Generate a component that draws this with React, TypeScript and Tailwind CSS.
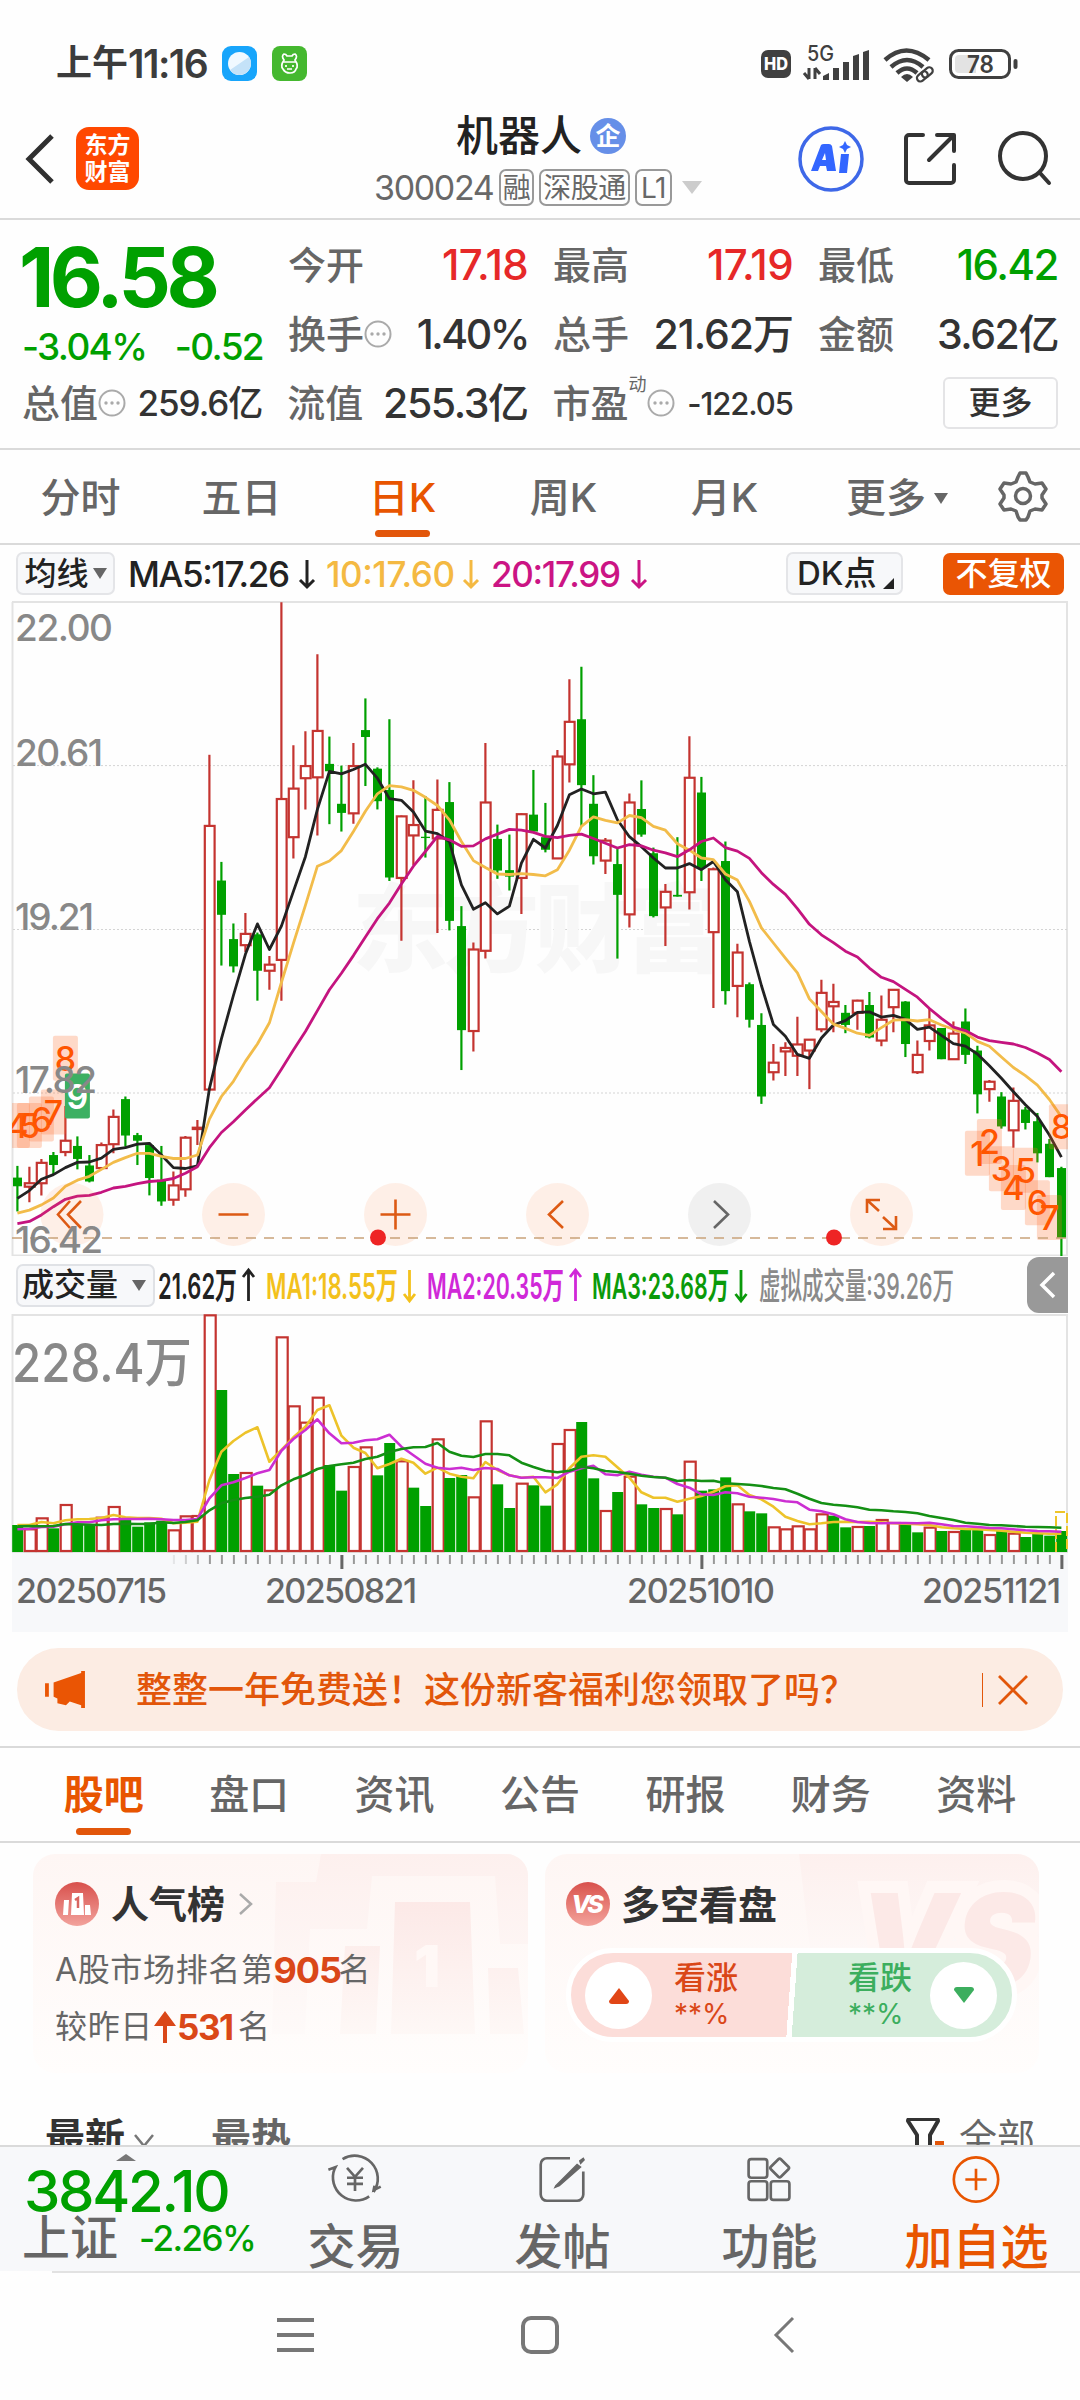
import type { ReactNode } from "react";

type Bar = [high: number, top: number, bottom: number, low: number, up: 0 | 1];

// One entry per trading day, in chart units (28 = 22.00, 1535 = 16.42)
const CANDLES: Bar[] = [
  [1328, 1355, 1375, 1433, 0], [1330, 1368, 1376, 1412, 1], [1312, 1321, 1368, 1396, 1],
  [1296, 1303, 1326, 1348, 0], [1190, 1270, 1296, 1306, 1], [1260, 1282, 1312, 1336, 0],
  [1303, 1327, 1364, 1366, 0], [1274, 1280, 1333, 1333, 1], [1198, 1215, 1278, 1299, 1],
  [1168, 1174, 1258, 1284, 0], [1252, 1257, 1270, 1326, 0], [1275, 1280, 1356, 1396, 0],
  [1282, 1360, 1410, 1420, 0], [1341, 1373, 1406, 1420, 1], [1259, 1263, 1382, 1399, 1],
  [1222, 1240, 1243, 1280, 1], [380, 544, 1152, 1152, 1], [627, 670, 749, 866, 0],
  [769, 805, 868, 882, 0], [745, 793, 819, 835, 1], [790, 794, 878, 947, 0],
  [844, 864, 878, 922, 1], [28, 482, 853, 947, 1], [358, 458, 570, 619, 1],
  [326, 406, 434, 506, 1], [148, 325, 432, 566, 1], [338, 401, 418, 540, 0],
  [405, 493, 514, 557, 0], [353, 406, 515, 539, 1], [250, 323, 339, 452, 0],
  [409, 412, 487, 506, 0], [298, 461, 663, 671, 0], [520, 522, 664, 809, 1],
  [439, 542, 566, 634, 1], [475, 569, 572, 617, 0], [437, 507, 573, 791, 1],
  [443, 489, 763, 785, 0], [729, 775, 1015, 1107, 0], [813, 829, 1017, 1064, 1],
  [353, 490, 832, 850, 1], [541, 574, 647, 666, 0], [564, 646, 661, 693, 0],
  [515, 517, 664, 747, 1], [415, 518, 557, 557, 0], [491, 570, 599, 605, 0],
  [369, 384, 619, 619, 1], [206, 304, 402, 444, 1], [177, 298, 450, 545, 0],
  [427, 493, 614, 633, 0], [572, 578, 624, 655, 1], [596, 632, 703, 850, 0],
  [469, 490, 748, 778, 1], [439, 505, 564, 569, 0], [594, 607, 752, 755, 0],
  [678, 696, 732, 821, 1], [570, 703, 707, 707, 0], [337, 433, 697, 737, 1],
  [431, 467, 641, 671, 0], [640, 644, 789, 964, 1], [580, 625, 925, 956, 0],
  [816, 836, 913, 985, 1], [905, 909, 991, 1009, 0], [976, 1003, 1168, 1185, 0],
  [1047, 1090, 1112, 1131, 1], [1043, 1056, 1064, 1121, 1], [984, 1048, 1074, 1121, 1],
  [1037, 1037, 1062, 1151, 1], [899, 929, 1013, 1020, 1], [908, 950, 960, 1020, 1],
  [957, 975, 1003, 1022, 0], [945, 947, 975, 1014, 1], [927, 957, 1032, 1034, 0],
  [935, 991, 1039, 1052, 1], [921, 922, 962, 1020, 1], [948, 949, 1047, 1077, 0],
  [1039, 1072, 1112, 1116, 1], [964, 1004, 1040, 1062, 1], [1010, 1010, 1082, 1082, 0],
  [995, 1023, 1082, 1082, 1], [965, 995, 1072, 1093, 0], [1051, 1062, 1163, 1207, 0],
  [1130, 1134, 1151, 1180, 1], [1158, 1168, 1237, 1242, 0], [1147, 1178, 1246, 1286, 1],
  [1192, 1198, 1229, 1244, 0], [1206, 1225, 1299, 1320, 0], [1266, 1277, 1354, 1354, 0],
  [1330, 1333, 1494, 1537, 0],
];

const MA5 = [
  1403, 1385, 1359, 1348, 1332, 1320, 1319, 1310, 1290, 1286, 1278, 1276, 1303, 1332, 1334, 1328,
  1150, 1035, 935, 840, 770, 829, 775, 695, 615, 506, 418, 424, 414, 402, 434, 481, 485, 512, 556,
  562, 580, 680, 736, 721, 747, 729, 630, 575, 595, 543, 472, 459, 470, 466, 530, 569, 592, 618,
  641, 641, 631, 645, 626, 668, 696, 810, 912, 1002, 1029, 1071, 1080, 1033, 1003, 993, 974, 973,
  985, 981, 990, 1013, 1008, 1027, 1046, 1052, 1070, 1097, 1126, 1157, 1187, 1214, 1257, 1308,
];
const MA10 = [
  1437, 1430, 1418, 1402, 1375, 1361, 1352, 1336, 1320, 1309, 1299, 1299, 1306, 1311, 1311, 1303,
  1220, 1168, 1133, 1087, 1047, 998, 905, 815, 727, 637, 625, 601, 557, 510, 470, 451, 454, 462,
  478, 497, 530, 580, 624, 640, 655, 656, 654, 656, 659, 645, 600, 545, 523, 531, 537, 520, 525,
  545, 554, 585, 600, 618, 622, 655, 669, 718, 779, 814, 849, 883, 943, 972, 1001, 1011, 1022,
  1027, 1009, 992, 991, 994, 991, 1003, 1013, 1021, 1041, 1052, 1077, 1101, 1120, 1142, 1175, 1215,
];
const MA20 = [
  1461, 1456, 1441, 1422, 1405, 1398, 1396, 1389, 1379, 1375, 1369, 1364, 1362, 1357, 1345, 1330,
  1286, 1251, 1226, 1199, 1173, 1148, 1105, 1061, 1018, 970, 922, 884, 843, 800, 758, 722, 678,
  637, 603, 568, 576, 591, 590, 574, 563, 552, 554, 559, 568, 571, 566, 563, 573, 584, 595, 587,
  590, 600, 606, 615, 599, 580, 572, 594, 602, 619, 652, 679, 702, 735, 771, 795, 813, 833, 846,
  872, 893, 903, 921, 939, 965, 988, 1008, 1016, 1031, 1039, 1043, 1047, 1055, 1068, 1083, 1111,
];

// Negative values are falling days
const VOLUMES = [
  -825, 835, 802, -835, 762, -822, -824, 800, 768, -810, -830, -817, -812, 838, 796, 795, 193, -420,
  -672, 666, -707, 718, 259, 466, 515, 440, -645, -722, 648, 589, -676, -579, 631, -713, -768, 565,
  -684, -675, 739, 511, -703, -774, 698, -706, -767, 579, 537, -516, -685, 780, -726, 677, -763,
  -774, 774, -793, 632, -722, -718, -682, 760, -784, -790, 829, 835, 826, 835, 790, -797, -832, 828,
  -828, 807, 816, -823, -847, 830, -843, 843, -840, -840, 852, -843, 848, -861, -852, -857, -843,
];
const VMA1 = [
  825, 825, 816, 820, 811, 808, 807, 804, 795, 802, 804, 804, 806, 820, 818, 815, 690, 605, 573,
  548, 532, 635, 600, 562, 530, 480, 466, 557, 593, 609, 655, 642, 626, 638, 671, 653, 671, 680,
  685, 636, 660, 676, 683, 680, 727, 703, 655, 620, 616, 620, 652, 683, 727, 743, 743, 755, 746,
  738, 725, 709, 706, 735, 748, 770, 800, 813, 823, 820, 816, 815, 816, 815, 817, 820, 821, 823,
  825, 832, 835, 837, 838, 840, 842, 845, 848, 850, 851, 851,
];
const VMA2 = [
  838, 836, 831, 830, 823, 817, 817, 811, 808, 807, 807, 806, 808, 810, 810, 807, 745, 706, 697,
  684, 670, 660, 602, 567, 540, 508, 550, 580, 578, 571, 568, 554, 590, 616, 641, 653, 657, 653,
  660, 654, 657, 676, 683, 682, 682, 684, 665, 655, 647, 673, 676, 665, 674, 680, 683, 702, 713,
  733, 735, 727, 730, 740, 743, 747, 754, 757, 779, 784, 793, 808, 816, 819, 820, 819, 819, 820,
  818, 823, 828, 829, 831, 834, 835, 838, 841, 843, 844, 845,
];
const VMA3 = [
  829, 828, 829, 828, 822, 823, 824, 825, 822, 821, 822, 822, 817, 819, 816, 811, 781, 760, 750,
  744, 740, 734, 706, 688, 675, 657, 648, 643, 638, 627, 620, 606, 597, 592, 591, 579, 605, 617,
  621, 612, 612, 616, 638, 651, 662, 667, 662, 650, 655, 663, 666, 671, 677, 681, 683, 693, 690,
  693, 692, 700, 702, 704, 708, 714, 718, 731, 746, 759, 764, 767, 772, 779, 781, 784, 786, 790,
  798, 804, 810, 818, 821, 825, 826, 828, 830, 831, 832, 833,
];

const RED = "#c43430";
const GREEN = "#00a000";

const cx = (i: number) => 17.4 + i * 12;
const py = (v: number) => v / 2.306 - 10;
const vy = (v: number) => (v - 192) / 3;
const line = (values: number[], y: (v: number) => number) =>
  values.map((v, i) => `${cx(i)},${y(v).toFixed(1)}`).join(" ");

// Sequence markers: [digit, day index, top]
const MARKS_LEFT: [string, number, number][] = [
  ["4", 0, 1183], ["5", 1, 1183], ["6", 2, 1168], ["7", 3, 1152], ["8", 4, 1028],
];
const MARKS_RIGHT: [string, number, number][] = [
  ["1", 80, 1247], ["2", 81, 1220], ["3", 82, 1283], ["4", 83, 1326],
  ["5", 84, 1286], ["6", 85, 1361], ["7", 86, 1395], ["8", 87, 1186],
];

// Price labels: [text, baseline, width]
const GRID: [string, number, number][] = [
  ["22.00", 118, 98], ["20.61", 406, 88], ["19.21", 785, 79], ["17.82", 1160, 82], ["16.42", 1528, 88],
];

function StatusBar() {
  return (
    <div className="flex h-[110px] items-center justify-between pt-[16px] pr-[60px] pl-[56px]">
      <div className="flex items-center text-[#3c3c3c]">
        <span className="text-[36px] font-bold">上午</span>
        <span className="w-[84px] text-[39px] font-semibold tracking-[-0.04em]">11:16</span>
        <svg className="ml-[10px]" width="35" height="35" viewBox="0 0 35 35">
          <rect width="35" height="35" rx="9" fill="#18a5fb" />
          <circle cx="17.5" cy="17.5" r="11.5" fill="#f0f9ff" />
          <path d="M8 24 27 11a11.5 11.5 0 0 1-19 13z" fill="#c4e2f8" />
        </svg>
        <svg className="ml-[15px]" width="35" height="35" viewBox="0 0 35 35" fill="none" stroke="#fff" strokeWidth="1.7">
          <rect width="35" height="35" rx="8" fill="#45b82f" stroke="none" />
          <path d="M12 14q-3-4 0-6 2 0 3 2h5q1-2 3-2 3 2 0 6 4 6 1 9-1 4-6 4t-7-4q-3-3 1-9zM11 16h13M14 19v2M21 19v2M15 23h5" />
        </svg>
      </div>
      <svg width="260" height="42" viewBox="0 0 260 42">
        <rect x="1" y="8" width="30" height="28" rx="7" fill="#404040" />
        <text x="4" y="28" fontSize="17" fontWeight="800" fill="#fff" textLength="24" lengthAdjust="spacingAndGlyphs">HD</text>
        <text x="47" y="19" fontSize="21" fontWeight="500" fill="#404040" textLength="27" lengthAdjust="spacingAndGlyphs">5G</text>
        <path d="M49 26v11M49 37l-5-6M55 37V26M55 26l5 6" stroke="#404040" strokeWidth="3" fill="none" />
        <path d="M63 38v-4l6-3v7zM73 26h6v12h-6zM83 20h6v18h-6zM93 14l6-2v26h-6zM103 10l6-2v30h-6z" fill="#404040" />
        <g fill="none" stroke="#404040" strokeWidth="4.5">
          <path d="M125 18q21-19 44 0" />
          <path d="M131 25q16-14 32 0" />
          <path d="M137 31q10-9 20 0" />
        </g>
        <path d="M141 35q6-6 12 0l-6 5z" fill="#404040" />
        <g fill="none" stroke="#404040" strokeWidth="2.2">
          <rect x="156" y="31" width="12" height="7" rx="3.5" fill="#fff" transform="rotate(-40 162 34)" />
          <rect x="161" y="27" width="12" height="7" rx="3.5" transform="rotate(-40 167 30)" />
        </g>
        <rect x="190.500" y="8.500" width="59" height="27" rx="8" fill="#fff" stroke="#404040" strokeWidth="3" />
        <path d="M199 13h17v18h-17a4 4 0 0 1-4-4v-10a4 4 0 0 1 4-4z" fill="#e3e3e3" />
        <text x="207" y="31" fontSize="24" fontWeight="600" fill="#404040" textLength="27" lengthAdjust="spacingAndGlyphs">78</text>
        <rect x="253.500" y="17" width="4" height="10" rx="2" fill="#404040" />
      </svg>
    </div>
  );
}

function Header() {
  return (
    <div className="flex h-[110px] items-center border-b-2 border-[#dadada] pr-[26px] pb-[11px] pl-[25px]">
      <svg width="30" height="52" viewBox="0 0 30 52" fill="none" stroke="#303030" strokeWidth="5">
        <path d="M27 3 4 26l23 23" />
      </svg>
      <div className="ml-[21px] grid h-[63px] w-[63px] place-content-center rounded-[13px] bg-[#ff4800] text-center text-[23px] leading-[27px] font-bold text-white">
        <span>东方</span>
        <span>财富</span>
      </div>
      <div className="mt-[4px] ml-[235px] flex w-[328px] flex-col">
        <div className="flex items-center pl-[82px]">
          <span className="text-[42px] font-medium text-[#222]">机器人</span>
          <span className="ml-[8px] grid h-[36px] w-[36px] place-content-center rounded-full bg-[#668fe8] text-[25px] font-bold text-white">企</span>
        </div>
        <div className="mt-[12px] flex items-center text-[#686868]">
          <span className="w-[125px] text-[34px] tracking-[-0.04em]">300024</span>
          <Tag className="w-[35px]">融</Tag>
          <Tag className="ml-[5px] w-[91px]">深股通</Tag>
          <Tag className="ml-[5px] w-[37px]">L1</Tag>
          <span className="ml-[10px] border-x-[10px] border-t-[13px] border-x-transparent border-t-[#ccc]" />
        </div>
      </div>
      <svg className="ml-auto" width="258" height="68" viewBox="-1 0 258 68" fill="none">
        <circle cx="34" cy="34" r="31" stroke="#3e68e8" strokeWidth="3.500" />
        <path d="M14 46 24 20q1-1 3-1h5q2 0 3 2l4 25h-9l-1-5h-6l-2 5zM25 35h4l-1-7zM44 29h8l-2 19h-8z" fill="#3366ff" fillRule="evenodd" />
        <path d="m48 16 2 4 4 2-4 2-2 4-2-4-4-2 4-2z" fill="#3366ff" />
        <g stroke="#333" strokeWidth="4" strokeLinecap="round" strokeLinejoin="round">
          <path d="M126 10h-14a3 3 0 0 0-3 3v42a3 3 0 0 0 3 3h42a3 3 0 0 0 3-3V40M140 10h17v16M156 11l-24 24" />
          <circle cx="226" cy="31" r="23" />
          <path d="m243 48 9 10" />
        </g>
      </svg>
    </div>
  );
}

function Tag({ className, children }: { className: string; children: ReactNode }) {
  return (
    <span className={`grid h-[37px] place-content-center rounded-[7px] border-2 border-[#999] text-[28px] tracking-[-0.02em] ${className}`}>
      {children}
    </span>
  );
}

function Dots() {
  return (
    <svg width="28" height="30" viewBox="0 0 28 30" fill="#aaa">
      <circle cx="14" cy="15" r="12.500" fill="none" stroke="#aaa" strokeWidth="2" />
      <circle cx="8" cy="15" r="1.700" />
      <circle cx="14" cy="15" r="1.700" />
      <circle cx="20" cy="15" r="1.700" />
    </svg>
  );
}

function Quote({ label, value, valueClass, dots }: { label: string; value: string; valueClass?: string; dots?: boolean }) {
  return (
    <div className="flex items-center">
      <span className="text-[38px] font-medium text-[#666]">{label}</span>
      {dots && <Dots />}
      <span className={`ml-auto font-medium whitespace-nowrap ${valueClass ?? "text-[41px] tracking-[-0.035em] text-[#333]"}`}>{value}</span>
    </div>
  );
}

function Quotes() {
  return (
    <div className="h-[230px] border-b-2 border-[#dadada] px-[22px] pt-[10px]">
      <div className="flex gap-[25px]">
        <div className="w-[241px]">
          <div className="-ml-[3px] flex h-[96px] items-center text-[82px] font-bold tracking-[-0.055em] text-[#00a000]">16.58</div>
          <div className="flex h-[41px] items-center justify-between text-[37px] font-medium tracking-[-0.045em] text-[#00a000]">
            <span>-3.04%</span>
            <span>-0.52</span>
          </div>
        </div>
        <div className="grid flex-1 grid-cols-3 grid-rows-[70px_68px] gap-x-[25px]">
          <Quote label="今开" value="17.18" valueClass="text-[42px] tracking-[-0.015em] text-[#e62828]" />
          <Quote label="最高" value="17.19" valueClass="text-[42px] tracking-[-0.015em] text-[#e62828]" />
          <Quote label="最低" value="16.42" valueClass="text-[42px] tracking-[-0.035em] text-[#00a000]" />
          <Quote label="换手" value="1.40%" valueClass="text-[41px] tracking-[-0.06em] text-[#333]" dots />
          <Quote label="总手" value="21.62万" valueClass="text-[41px] tracking-[-0.025em] text-[#333]" />
          <Quote label="金额" value="3.62亿" />
        </div>
      </div>
      <div className="grid h-[70px] grid-cols-4 gap-x-[25px]">
        <Quote label="总值" value="259.6亿" valueClass="text-[35px] tracking-[-0.03em] text-[#333]" dots />
        <Quote label="流值" value="255.3亿" />
        <div className="flex items-center">
          <span className="text-[38px] font-medium text-[#666]">市盈</span>
          <span className="-mt-[36px] text-[18px] text-[#666]">动</span>
          <Dots />
          <span className="ml-auto text-[31px] font-medium tracking-[-0.035em] text-[#333]">-122.05</span>
        </div>
        <div className="flex items-center justify-end">
          <span className="grid h-[52px] w-[115px] place-content-center rounded-[6px] border-2 border-[#e4e4e6] text-[32px] font-medium text-[#333]">更多</span>
        </div>
      </div>
    </div>
  );
}

function PeriodTabs() {
  const tabs = ["分时", "五日", "日K", "周K", "月K"];
  return (
    <div className="flex h-[95px] border-b-2 border-[#dadada] text-[40px] font-medium text-[#666]">
      {tabs.map((tab) => (
        <div key={tab} className={`relative flex w-[161px] items-center justify-center pt-[3px] ${tab === "日K" ? "text-[#e85500]" : ""}`}>
          {tab}
          {tab === "日K" && <span className="absolute bottom-[6px] h-[7px] w-[55px] rounded-full bg-[#e2560a]" />}
        </div>
      ))}
      <div className="flex items-center pt-[3px] pl-[41px]">
        更多
        <span className="ml-[8px] border-x-[7px] border-t-[11px] border-x-transparent border-t-[#666]" />
      </div>
      <svg className="mt-[20px] ml-[49px]" width="52" height="52" viewBox="0 0 52 52" fill="none" stroke="#666" strokeWidth="3.500" strokeLinejoin="round">
        <path d="M21 7 23 3h6l2 4 2 5 5 2 7-1 4 6-4 6v3l4 6-4 6-7-1-5 2-2 6-2 3h-6l-2-3-2-6-5-2-7 1-4-6 4-6v-3l-4-6 4-6 7 1 5-2z" />
        <circle cx="26" cy="26" r="7.500" />
      </svg>
    </div>
  );
}

function MaLegend() {
  return (
    <div className="flex h-[55px] items-center pt-[2px] pr-[16px] pl-[16px]">
      <span className="flex h-[43px] w-[99px] items-center justify-center rounded-[7px] border-2 border-[#e4e5e8] bg-[#f7f8fa] text-[32px] font-medium text-[#222]">
        均线
        <span className="ml-[4px] border-x-[7px] border-t-[11px] border-x-transparent border-t-[#666]" />
      </span>
      <svg className="ml-[11px]" width="530" height="40" viewBox="0 0 530 40" fontSize="35" fontWeight="500">
        <text x="2" y="33" fill="#222" textLength="162">MA5:17.26</text>
        <text x="200" y="33" fill="#f4b942" textLength="129">10:17.60</text>
        <text x="365" y="33" fill="#cb1484" textLength="130">20:17.99</text>
        <g fill="none" strokeWidth="3">
          <path d="M181 6v27M174 26l7 7 7-7" stroke="#222" />
          <path d="M345 6v27M338 26l7 7 7-7" stroke="#f4b942" />
          <path d="M513 6v27M506 26l7 7 7-7" stroke="#cb1484" />
        </g>
      </svg>
      <span className="ml-auto flex h-[43px] w-[117px] items-center rounded-[7px] border-2 border-[#e4e5e8] bg-[#f7f8fa] pl-[9px] text-[33px] font-medium text-[#222]">
        DK点
        <svg className="mt-[20px] ml-[6px]" width="11" height="11" viewBox="0 0 11 11">
          <path d="M11 0v11H0z" fill="#222" />
        </svg>
      </span>
      <span className="ml-[40px] grid h-[42px] w-[121px] place-content-center rounded-[7px] bg-[#ea5504] text-[32px] font-medium text-white">不复权</span>
    </div>
  );
}

function Candle({ bar, i }: { bar: Bar; i: number }) {
  const [high, top, bottom, low, up] = bar;
  const x = cx(i);
  const h = Math.max(py(bottom) - py(top), 1);
  if (!up) {
    return (
      <g fill={GREEN}>
        <rect x={x - 1.1} y={py(high)} width="2.200" height={py(low) - py(high)} />
        <rect x={x - 4.4} y={py(top)} width="9" height={h} />
      </g>
    );
  }
  return (
    <g stroke={RED} strokeWidth="2.200">
      <path d={`M${x} ${py(high)}V${py(top)}M${x} ${py(bottom)}V${py(low)}`} />
      <rect x={x - 4.6} y={py(top)} width="9.800" height={h} fill="#fff" />
    </g>
  );
}

function Mark({ mark: [digit, day, top], green }: { mark: [string, number, number]; green?: boolean }) {
  const x = cx(day);
  return (
    <g>
      <rect x={x - 12.5} y={py(top)} width="25" height="45" rx="2" fill={green ? "#3cb062" : "#ff6a28"} fillOpacity={green ? 1 : 0.25} />
      <text x={x} y={py(top) + 35} textAnchor="middle" fontSize="34" fontWeight={green ? 600 : 500} fill={green ? "#fff" : "#ff5500"}>{digit}</text>
    </g>
  );
}

function PriceChart() {
  return (
    <svg className="block" width="1080" height="656" viewBox="0 0 1080 656" fill="none">
      <clipPath id="plot"><rect x="12" y="2" width="1056" height="655" /></clipPath>
      <g stroke="#e3e3e3" strokeWidth="2">
        <path d="M12.500 2v654M1067 2v654M12 2h1056M12 655.500h1056" />
      </g>
      <path d="M13 165.600h1054M13 329.500h1054M13 493h1054" stroke="#d4d4d4" strokeWidth="1" strokeDasharray="2 2" />
      <text x="352" y="364" fontSize="96" fontWeight="900" fill="#f7f7f7" textLength="370">东方财富</text>
      <g clipPath="url(#plot)">
        {CANDLES.map((bar, i) => <Candle key={i} bar={bar} i={i} />)}
        <g strokeWidth="2.800" strokeLinejoin="round">
          <polyline points={line(MA5, py)} stroke="#222" />
          <polyline points={line(MA10, py)} stroke="#f2bc4a" />
          <polyline points={line(MA20, py)} stroke="#c4147f" />
        </g>
        {MARKS_LEFT.map((m) => <Mark key={m[0]} mark={m} />)}
        {MARKS_RIGHT.map((m) => <Mark key={m[0]} mark={m} />)}
      </g>
      {[72, 233.5, 395.5, 557.5, 719.5, 881.5].map((x, i) => (
        <circle key={x} cx={x} cy="614.500" r="31.500" fill={i === 4 ? "#999" : "#ff7830"} fillOpacity={i === 4 ? 0.14 : 0.11} />
      ))}
      <path d="M12 638h1054" stroke="#c9a27a" strokeWidth="1.500" strokeDasharray="10 8" />
      <Mark mark={["9", 5, 1115]} green />
      <g fill="#888" fontSize="37" fontWeight="500">
        {GRID.map(([label, y, width]) => (
          <text key={label} x="15" y={py(y)} textLength={width}>{label}</text>
        ))}
      </g>
      <g stroke="#dd5a14" strokeWidth="2.600">
        <path d="M70 601 58 614.500 70 628M81 601 68 614.500 81 628" />
        <path d="M218.500 614.500h30M380.500 614.500h30M395.500 599.500v30M563 601l-14 13.500 14 13.500" />
        <path d="M714 601l14 13.500-14 13.500" stroke="#666" />
        <path d="M867 613v-13h13M867 600l12 11M883 629h13v-13M896 629l-13-12" />
      </g>
      <g fill="#ee2424">
        <circle cx="378" cy="637.500" r="8" />
        <circle cx="834" cy="637.500" r="8" />
      </g>
    </svg>
  );
}

function VolumeLegend() {
  return (
    <div className="flex h-[58px] items-center pl-[16px]">
      <span className="flex h-[43px] w-[139px] items-center rounded-[7px] border-2 border-[#e0e2e6] bg-[#f7f8fa] pl-[4px] text-[32px] font-medium text-[#222]">
        成交量
        <span className="ml-[14px] border-x-[7px] border-t-[11px] border-x-transparent border-t-[#666]" />
      </span>
      <svg width="872" height="44" viewBox="155 0 872 44" fontSize="36" fontWeight="600" fill="none" strokeWidth="2.800">
        <text x="158" y="36" fill="#222" textLength="79" lengthAdjust="spacingAndGlyphs">21.62万</text>
        <text x="266" y="36" fill="#f3c11c" textLength="132" lengthAdjust="spacingAndGlyphs">MA1:18.55万</text>
        <text x="427" y="36" fill="#d028d8" textLength="137" lengthAdjust="spacingAndGlyphs">MA2:20.35万</text>
        <text x="592" y="36" fill="#0a9a0a" textLength="137" lengthAdjust="spacingAndGlyphs">MA3:23.68万</text>
        <text x="759" y="36" fill="#8a8a8a" fontWeight="500" textLength="195" lengthAdjust="spacingAndGlyphs">虚拟成交量:39.26万</text>
        <path d="M248.500 38V7M243 14l5.500-7 5.500 7" stroke="#222" />
        <path d="M409.500 7v31M404 31l5.500 7 5.500-7" stroke="#f3c11c" />
        <path d="M575.500 38V7M570 14l5.500-7 5.500 7" stroke="#d028d8" />
        <path d="M741 7v31M735.500 31l5.500 7 5.500-7" stroke="#0a9a0a" />
      </svg>
      <svg width="41" height="56" viewBox="0 0 41 56">
        <path d="M41 0v56H12A12 12 0 0 1 0 44V12A12 12 0 0 1 12 0z" fill="#999" />
        <path d="M27 16 15 28l12 12" fill="none" stroke="#fff" strokeWidth="3.500" />
      </svg>
    </div>
  );
}

function VolumeChart() {
  return (
    <svg className="block" width="1080" height="239" viewBox="0 0 1080 239" fill="none">
      <path d="M12.500 0v238M1067 0v238M12 1h1056M12 238h1056" stroke="#e3e3e3" strokeWidth="2" />
      <text x="12" y="68" fontSize="53" fontWeight="500" fill="#888" textLength="180" lengthAdjust="spacingAndGlyphs">228.4万</text>
      {VOLUMES.map((v, i) => {
        const y = vy(Math.abs(v));
        return v < 0 ? (
          <rect key={i} x={cx(i) - 5.2} y={y} width="11" height={238 - y} fill={GREEN} />
        ) : (
          <rect key={i} x={cx(i) - 4.7} y={y + 1} width="11" height={236 - y} fill="#fff" stroke={RED} strokeWidth="2.200" />
        );
      })}
      <path d="M1056 238v-40h11v40" stroke="#eec52a" strokeWidth="2" strokeDasharray="10 3" />
      <g strokeWidth="2.600" strokeLinejoin="round">
        <polyline points={line(VMA1, vy)} stroke="#edc32a" />
        <polyline points={line(VMA2, vy)} stroke="#cc2ed2" />
        <polyline points={line(VMA3, vy)} stroke="#149014" />
      </g>
    </svg>
  );
}

function DateAxis() {
  return (
    <div className="mx-[12px] h-[79px] bg-[#f7f8fa]">
      <svg className="block" width="1056" height="16" viewBox="12 0 1056 16">
        {CANDLES.slice(13).map((_, k) => {
          const i = k + 13;
          const major = i === 27 || i === 57 || i === 87;
          return (
            <rect
              key={i}
              x={cx(i) - (major ? 1 : 0.5)}
              y="2"
              width={major ? 3 : 2}
              height={major ? 14 : 9}
              fill={major ? "#666" : "#999"}
              opacity={k < 3 ? 0.2 + k * 0.25 : 1}
            />
          );
        })}
      </svg>
      <svg className="block" width="1056" height="44" viewBox="12 0 1056 44" fontSize="34" fontWeight="500" fill="#666">
        <text x="16" y="34" textLength="151">20250715</text>
        <text x="265" y="34" textLength="152">20250821</text>
        <text x="627" y="34" textLength="148">20251010</text>
        <text x="922" y="34" textLength="139">20251121</text>
      </svg>
    </div>
  );
}

function Banner() {
  return (
    <div className="mx-[17px] mt-[16px] flex h-[83px] items-center rounded-full bg-[#fcece3] pr-[35px] pl-[27px] text-[#e2560a]">
      <svg width="42" height="38" viewBox="0 0 42 40" fill="#ea5504">
        <path d="M0 13h4v14H0zM9 12 38 2V0h4v39h-4v-3l-12-4-4 4-9-2v-5l-4-2z" />
      </svg>
      <span className="ml-[50px] text-[36px] font-medium">整整一年免费送！这份新客福利您领取了吗？</span>
      <span className="ml-auto h-[34px] w-[1.5px] bg-[#e2560a]" />
      <svg className="ml-[15px]" width="30" height="30" viewBox="0 0 30 30" stroke="#e2560a" strokeWidth="2.800">
        <path d="m1 1 28 28M29 1 1 29" />
      </svg>
    </div>
  );
}

function SectionTabs() {
  const tabs = ["股吧", "盘口", "资讯", "公告", "研报", "财务", "资料"];
  return (
    <div className="mt-[15px] flex h-[97px] border-y-2 border-[#dadada] px-[31px] text-[40px] font-medium text-[#666]">
      {tabs.map((tab, i) => (
        <div key={tab} className={`relative flex flex-1 items-center justify-center ${i === 0 ? "font-bold text-[#e85500]" : ""}`}>
          {tab}
          {i === 0 && <span className="absolute bottom-[6px] h-[7px] w-[55px] rounded-full bg-[#e2560a]" />}
        </div>
      ))}
    </div>
  );
}

function RankCard() {
  return (
    <div className="relative h-[219px] w-[495px] overflow-hidden rounded-[22px] bg-gradient-to-b from-[#fef6f4] to-[#fffdfc] pt-[28px] pl-[22px]">
      <svg className="absolute top-0 right-0" width="260" height="219" viewBox="0 0 260 219">
        <defs>
          <linearGradient id="podium" x1="0" y1="0" x2="0" y2="1">
            <stop offset="0" stopColor="#fce9e7" />
            <stop offset="1" stopColor="#fef8f6" />
          </linearGradient>
          <linearGradient id="halo" x1="0" y1="0" x2="0" y2="1">
            <stop offset="0" stopColor="#fdf0ee" />
            <stop offset="1" stopColor="#fefaf9" />
          </linearGradient>
        </defs>
        <path d="M53 0h207v90h-28l-5-68H104l-5 53H42l-5 105H4l4-152h40z" fill="url(#halo)" />
        <path d="M127 48h75l5 132h-84zM77 92h35l-4 88H72zM220 114h30l6 66h-34z" fill="url(#podium)" />
        <text x="146" y="133" fontSize="58" fontWeight="900" fill="#fff8f6">1</text>
      </svg>
      <div className="relative flex h-[44px] items-center">
        <svg width="44" height="44" viewBox="0 0 44 44">
          <defs>
            <linearGradient id="badge" x1="0" y1="0" x2="0" y2="1">
              <stop offset="0" stopColor="#d8504c" />
              <stop offset="1" stopColor="#f2a29c" />
            </linearGradient>
          </defs>
          <circle cx="22" cy="22" r="22" fill="url(#badge)" />
          <path d="M17 11h11l1 22H16zM9 18h5l-1 15H8zM30 23h5l1 10h-6z" fill="#fff" />
          <path d="m20 18 3-2v10" stroke="#d96560" strokeWidth="2.500" fill="none" />
        </svg>
        <span className="ml-[12px] text-[38px] font-bold text-[#333]">人气榜</span>
        <svg className="ml-[14px]" width="14" height="22" viewBox="0 0 14 22" fill="none" stroke="#aaa" strokeWidth="2.500">
          <path d="m1 1 11 10L1 21" />
        </svg>
      </div>
      <div className="relative mt-[28px] flex h-[32px] items-center text-[32px] text-[#666]">
        <span className="tracking-[0.02em]">A股市场排名第</span>
        <b className="w-[65px] text-[36px] tracking-[-0.03em] text-[#da4718]">905</b>名
      </div>
      <div className="relative mt-[25px] flex h-[32px] items-center text-[32px] text-[#666]">
        <span className="tracking-[0.02em]">较昨日</span>
        <svg width="24" height="34" viewBox="0 0 24 34" fill="#da4718">
          <path d="M12 1 1 16h9v17h4V16h9z" />
        </svg>
        <b className="w-[61px] text-[35px] tracking-[-0.04em] text-[#da4718]">531</b>名
      </div>
    </div>
  );
}

function VsCard() {
  return (
    <div className="relative h-[219px] w-[494px] overflow-hidden rounded-[22px] bg-gradient-to-b from-[#fef6f4] to-[#fffdfc] pt-[28px] pl-[21px]">
      <svg className="absolute top-0 right-0" width="260" height="219" viewBox="0 0 260 219">
        <path d="M20 0h240v120H34z" fill="url(#halo)" />
        <text x="80" y="132" fontSize="128" fontWeight="900" fontStyle="italic" fill="#fce9e7" stroke="#fff7f5" strokeWidth="24" paintOrder="stroke" textLength="176" lengthAdjust="spacingAndGlyphs">VS</text>
      </svg>
      <div className="relative flex h-[44px] items-center">
        <span className="grid h-[44px] w-[44px] place-content-center rounded-full bg-gradient-to-b from-[#d8504c] to-[#f2a29c] pr-[4px] text-[25px] font-extrabold tracking-[-0.12em] text-white italic">VS</span>
        <span className="ml-[11px] text-[39px] font-bold text-[#333]">多空看盘</span>
      </div>
      <div className="relative mt-[22px] flex h-[94px] w-[451px] items-center rounded-full border-[5px] border-white bg-[linear-gradient(94deg,#fcddd9_49.5%,#fff_49.5%,#fff_50.700%,#d5eddb_50.700%)] text-[32px] text-[#da4718]">
        <span className="ml-[14px] grid h-[67px] w-[67px] place-content-center rounded-full bg-white">
          <svg width="22" height="17" viewBox="0 0 22 17"><path d="M11 1 21 14q0 3-3 3H4q-3 0-3-3z" fill="#e14616" /></svg>
        </span>
        <div className="ml-[22px] flex flex-col">
          <span className="font-medium">看涨</span>
          <span className="mt-[6px] text-[28px]">**%</span>
        </div>
        <div className="ml-[110px] flex flex-col text-[#3cae5e]">
          <span className="font-medium">看跌</span>
          <span className="mt-[6px] text-[28px]">**%</span>
        </div>
        <span className="ml-[18px] grid h-[67px] w-[67px] place-content-center rounded-full bg-white">
          <svg width="22" height="17" viewBox="0 0 22 17"><path d="M11 16 21 3q0-3-3-3H4Q1 0 1 3z" fill="#3cae5e" /></svg>
        </span>
      </div>
    </div>
  );
}

function PostFilter() {
  return (
    <div className="mt-[45px] flex h-[27px] items-start overflow-hidden pr-[45px] pl-[45px] text-[40px]">
      <span className="font-bold text-[#333]">最新</span>
      <svg className="mt-[16px] ml-[8px]" width="22" height="14" viewBox="0 0 22 14" fill="none" stroke="#777" strokeWidth="2.500">
        <path d="m2 1 9 11 9-11" />
      </svg>
      <span className="ml-[56px] font-bold text-[#666]">最热</span>
      <svg className="ml-auto" width="42" height="30" viewBox="0 0 42 30" fill="none" stroke="#333" strokeWidth="4" strokeLinejoin="round">
        <path d="M12 30V17L3 3q0-2 2-2h26q2 0 2 2l-8 14v13" />
        <path d="M30 25h9" stroke="#e2560a" />
      </svg>
      <span className="ml-[12px] text-[38px] text-[#666]">全部</span>
    </div>
  );
}

function NavItem({ label, className, children }: { label: string; className?: string; children: ReactNode }) {
  return (
    <div className={`flex w-[207px] flex-col items-center ${className ?? "text-[#666]"}`}>
      <svg className="mt-[5px]" width="62" height="62" viewBox="0 0 62 62" fill="none" stroke="currentColor" strokeWidth="3">
        {children}
      </svg>
      <span className="mt-[16px] ml-[2px] text-[48px] font-medium">{label}</span>
    </div>
  );
}

function BottomNav() {
  return (
    <div className="flex h-[126px] overflow-hidden border-t-2 border-[#dadada] bg-[#f7f8fa]">
      <div className="relative w-[251px] shrink-0 pl-[24px]">
        <span className="absolute top-[7px] left-[116px] border-x-[10px] border-b-[7px] border-x-transparent border-b-[#777]" />
        <div className="mt-[15px] text-[58px] font-medium tracking-[-0.04em] text-[#00a000]">3842.10</div>
        <div className="-mt-[6px] -ml-[2px] flex items-center whitespace-nowrap">
          <span className="text-[48px] font-medium text-[#666]">上证</span>
          <span className="ml-[21px] text-[35px] font-medium tracking-[-0.045em] text-[#00a000]">-2.26%</span>
        </div>
      </div>
      <NavItem label="交易">
        <path d="M17 8a26 26 0 0 1 35 37M1 20l8-3-2 4M47 50a26 26 0 0 1-39-31M60 39l-8 4 1-5M22 18l9 10 9-10M31 28v16M22 29h18M22 36h18" />
      </NavItem>
      <NavItem label="发帖">
        <path d="M40 7H14a7 7 0 0 0-7 7v34a7 7 0 0 0 7 7h34a7 7 0 0 0 7-7V22" />
        <path d="m24 38 24-24 4 3-24 21-5 2zM51 10l4-3 1 2-4 4z" fill="currentColor" strokeWidth="1.500" />
      </NavItem>
      <NavItem label="功能">
        <rect x="8" y="8" width="21" height="21" rx="3" />
        <rect x="8" y="33" width="21" height="21" rx="3" />
        <rect x="33" y="33" width="21" height="21" rx="3" />
        <rect x="35" y="10" width="16" height="16" rx="2" transform="rotate(45 43 18)" />
      </NavItem>
      <NavItem label="加自选" className="text-[#e85500]">
        <circle cx="31" cy="31" r="25" />
        <path d="M31 19v24M19 31h24" />
      </NavItem>
    </div>
  );
}

function SystemNav() {
  return (
    <div className="ml-[52px] h-[129px] border-t-2 border-[#e2e2e2]">
      <svg className="mt-[41px] ml-[222px]" width="526" height="42" viewBox="0 0 526 42" fill="none" stroke="#777" strokeWidth="4">
        <path d="M3 6h37M3 21h37M3 36h37" />
        <rect x="249" y="4" width="34" height="34" rx="8" />
        <path d="M519 4 502 21l17 17" strokeWidth="3" />
      </svg>
    </div>
  );
}

export default function App() {
  return (
    <div className="flex h-[2400px] w-[1080px] flex-col overflow-hidden bg-[#fefefe] font-['Inter','Noto_Sans_CJK_SC',sans-serif] leading-none">
      <StatusBar />
      <Header />
      <Quotes />
      <PeriodTabs />
      <div>
        <MaLegend />
        <PriceChart />
        <VolumeLegend />
        <VolumeChart />
        <DateAxis />
      </div>
      <Banner />
      <SectionTabs />
      <div className="mt-[11px] flex gap-[17px] px-[33px]">
        <RankCard />
        <VsCard />
      </div>
      <PostFilter />
      <BottomNav />
      <SystemNav />
    </div>
  );
}
